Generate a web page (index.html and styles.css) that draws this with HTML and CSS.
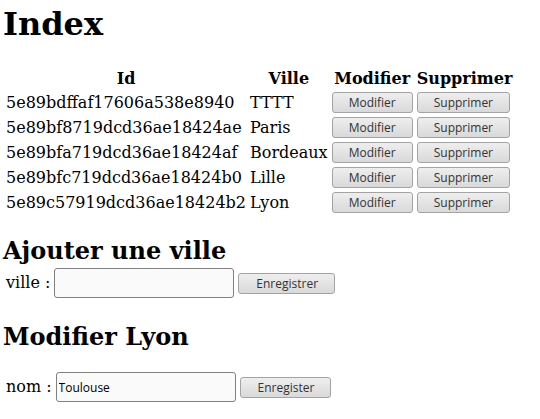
FILE: index.html
```html
<!DOCTYPE html>
<html lang="fr">
<head>
<meta charset="utf-8">
<title>Index</title>
<link rel="stylesheet" href="styles.css">
</head>
<body>
<h1 class="title">Index</h1>
<table class="cities">
  <thead>
    <tr><th class="col-id">Id</th><th>Ville</th><th>Modifier</th><th>Supprimer</th></tr>
  </thead>
  <tbody>
    <tr><td>5e89bdffaf17606a538e8940</td><td>TTTT</td><td><button class="btn btn-cell">Modifier</button></td><td><button class="btn btn-cell">Supprimer</button></td></tr>
    <tr><td>5e89bf8719dcd36ae18424ae</td><td>Paris</td><td><button class="btn btn-cell">Modifier</button></td><td><button class="btn btn-cell">Supprimer</button></td></tr>
    <tr><td>5e89bfa719dcd36ae18424af</td><td>Bordeaux</td><td><button class="btn btn-cell">Modifier</button></td><td><button class="btn btn-cell">Supprimer</button></td></tr>
    <tr><td>5e89bfc719dcd36ae18424b0</td><td>Lille</td><td><button class="btn btn-cell">Modifier</button></td><td><button class="btn btn-cell">Supprimer</button></td></tr>
    <tr><td>5e89c57919dcd36ae18424b2</td><td>Lyon</td><td><button class="btn btn-cell">Modifier</button></td><td><button class="btn btn-cell">Supprimer</button></td></tr>
  </tbody>
</table>
<h2 class="section-title section-add">Ajouter une ville</h2>
<form class="form-row form-add">
  <label class="label">ville :</label>
  <input class="field" type="text">
  <button class="btn btn-save" type="button">Enregistrer</button>
</form>
<h2 class="section-title section-edit">Modifier Lyon</h2>
<form class="form-row form-edit">
  <label class="label">nom :</label>
  <input class="field" type="text" value="Toulouse">
  <button class="btn btn-save" type="button">Enregister</button>
</form>
</body>
</html>
```

FILE: styles.css
```css
html { background: #fff; }
body {
  margin: 0;
  padding: 5px 3px 0;
  font-family: "DejaVu Serif", serif;
  font-size: 16px;
  color: #000;
}
.title {
  font-size: 32px;
  margin: 0 0 23px;
  line-height: normal;
}
.cities {
  border-spacing: 2px;
}
.cities th,
.cities td {
  padding: 1px;
}
.cities td { text-align: left; }
.col-id { width: 240px; }
.btn {
  font-family: "Open Sans", sans-serif;
  font-size: 12px;
  height: 21px;
  padding: 0 16px;
  border: 1px solid #a3a3a3;
  border-radius: 3px;
  background: linear-gradient(#eeeeee, #d9d9d9);
  color: #333;
  line-height: 1;
}
.btn-cell { display: block; }
.btn-save { padding: 0 16px 0 17px; }
.section-title {
  font-size: 24px;
  line-height: normal;
}
.section-add { margin: 20px 0 3px; }
.section-edit { margin: 24px 0 21px; }
.form-row {
  display: flex;
  align-items: baseline;
  padding-left: 3px;
  margin: 0;
}
.label { margin-right: 4px; }
.field {
  box-sizing: border-box;
  width: 180px;
  height: 30px;
  border: 1px solid #808080;
  border-radius: 3px;
  background: #fafafa;
  font-family: "Open Sans", sans-serif;
  font-size: 12px;
  padding: 0 2px;
  margin-right: 4px;
}
```
